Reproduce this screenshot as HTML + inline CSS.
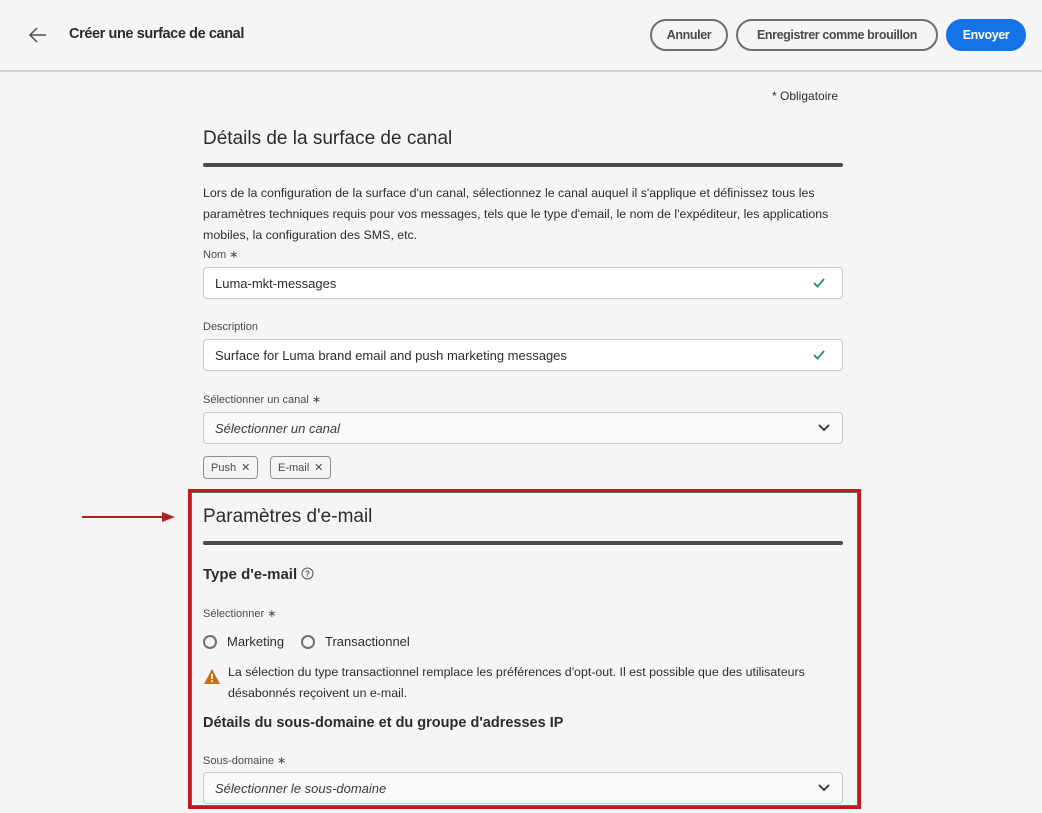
<!DOCTYPE html>
<html><head><meta charset="utf-8"><style>
*{box-sizing:border-box;margin:0;padding:0}
body{width:1042px;height:813px;overflow:hidden;background:#f5f5f5;font-family:"Liberation Sans",sans-serif;color:#2c2c2c;position:relative}
.abs{position:absolute}
.hdr{left:0;top:0;width:1042px;height:72px;border-bottom:2px solid #cfcfcf}
.btn{position:absolute;top:19px;height:32px;border:2px solid #6e6e6e;border-radius:16px;font-size:12.5px;font-weight:bold;color:#4b4b4b;display:flex;align-items:center;justify-content:center;white-space:nowrap;letter-spacing:-0.4px}
.lbl{position:absolute;left:203px;font-size:11px;color:#4b4b4b}
.inp{position:absolute;left:203px;width:640px;height:32px;border:1px solid #c9c9c9;background:#fff;border-radius:4px;font-size:13px;padding-left:11px;display:flex;align-items:center;color:#2c2c2c}
.sel{background:#fafafa;font-style:italic;color:#3a3a3a}
.chk{position:absolute;right:16px;top:8px}
.chev{position:absolute;right:12px;top:9px}
.tag{position:absolute;top:456px;height:23px;border:1px solid #8e8e8e;border-radius:4px;font-size:11px;color:#4b4b4b;display:flex;align-items:center;padding:0 7px;gap:5px}
.rule{position:absolute;left:203px;width:640px;height:4px;background:#4b4b4b;border-radius:2px}
.radio{position:absolute;top:635px;width:14px;height:14px;border:2px solid #707070;border-radius:50%}
</style></head><body>
<div class="abs hdr"></div>
<svg class="abs" style="left:28px;top:26px" width="20" height="18" viewBox="0 0 20 18"><path d="M18 9H2M9 2L2 9l7 7" fill="none" stroke="#505050" stroke-width="1.5"/></svg>
<div class="abs" style="left:69px;top:26px;font-size:14.5px;font-weight:bold;color:#2c2c2c;letter-spacing:-0.4px">Créer une surface de canal</div>
<div class="btn" style="left:650px;width:78px">Annuler</div>
<div class="btn" style="left:736px;width:202px">Enregistrer comme brouillon</div>
<div class="btn" style="left:946px;width:80px;background:#1473e6;border-color:#1473e6;color:#fff">Envoyer</div>

<div class="abs" style="left:772px;top:89px;font-size:12px;color:#2c2c2c">* Obligatoire</div>
<div class="abs" style="left:203px;top:128px;font-size:19px;color:#2c2c2c">Détails de la surface de canal</div>
<div class="rule" style="top:163px"></div>
<div class="abs" style="left:203px;top:183px;font-size:12.4px;line-height:21px;color:#2c2c2c">Lors de la configuration de la surface d'un canal, sélectionnez le canal auquel il s'applique et définissez tous les<br>paramètres techniques requis pour vos messages, tels que le type d'email, le nom de l'expéditeur, les applications<br>mobiles, la configuration des SMS, etc.</div>
<div class="lbl" style="top:248px">Nom ∗</div>
<div class="inp" style="top:267px">Luma-mkt-messages<svg class="chk" width="14" height="14" viewBox="0 0 14 14"><path d="M2 7l3.5 3.5L12 3" fill="none" stroke="#268e6c" stroke-width="1.8"/></svg></div>
<div class="lbl" style="top:321px">Description</div>
<div class="inp" style="top:339px">Surface for Luma brand email and push marketing messages<svg class="chk" width="14" height="14" viewBox="0 0 14 14"><path d="M2 7l3.5 3.5L12 3" fill="none" stroke="#268e6c" stroke-width="1.8"/></svg></div>
<div class="lbl" style="top:393px">Sélectionner un canal ∗</div>
<div class="inp sel" style="top:412px">Sélectionner un canal<svg class="chev" width="12" height="10" viewBox="0 0 12 10"><path d="M1 3l5 5 5-5" fill="none" stroke="#2c2c2c" stroke-width="1.8"/></svg></div>
<div class="tag" style="left:203px">Push <span>✕</span></div>
<div class="tag" style="left:270px">E-mail <span>✕</span></div>

<svg class="abs" style="left:82px;top:510px" width="95" height="14" viewBox="0 0 95 14"><path d="M0 7H82" stroke="#b02020" stroke-width="2"/><path d="M80 2l13 5-13 5z" fill="#b02020"/></svg>
<div class="abs" style="left:188px;top:489px;width:673px;height:320px;border:3px solid #c8161b;box-shadow:inset 0 0 0 1px #666"></div>
<div class="abs" style="left:203px;top:506px;font-size:19px;color:#2c2c2c">Paramètres d'e-mail</div>
<div class="rule" style="top:541px"></div>
<div class="abs" style="left:203px;top:566px;font-size:15px;font-weight:bold;color:#2c2c2c">Type d'e-mail <svg width="13" height="13" viewBox="0 0 13 13" style="vertical-align:-1px"><circle cx="6.5" cy="6.5" r="5.5" fill="none" stroke="#555" stroke-width="1"/><text x="6.5" y="9.5" font-size="8" text-anchor="middle" fill="#555" font-family="Liberation Sans">?</text></svg></div>
<div class="lbl" style="top:607px">Sélectionner ∗</div>
<div class="radio" style="left:203px"></div>
<div class="abs" style="left:227px;top:634px;font-size:13px">Marketing</div>
<div class="radio" style="left:301px"></div>
<div class="abs" style="left:325px;top:634px;font-size:13px">Transactionnel</div>
<svg class="abs" style="left:203px;top:668px" width="18" height="17" viewBox="0 0 18 17"><path d="M9 1L17 16H1z" fill="#cb6f10"/><rect x="8.1" y="6" width="1.8" height="5" fill="#fff"/><rect x="8.1" y="12.3" width="1.8" height="1.8" fill="#fff"/></svg>
<div class="abs" style="left:228px;top:662px;font-size:12.4px;line-height:21px">La sélection du type transactionnel remplace les préférences d'opt-out. Il est possible que des utilisateurs<br>désabonnés reçoivent un e-mail.</div>
<div class="abs" style="left:203px;top:715px;font-size:14.5px;font-weight:bold">Détails du sous-domaine et du groupe d'adresses IP</div>
<div class="lbl" style="top:754px">Sous-domaine ∗</div>
<div class="inp sel" style="top:772px">Sélectionner le sous-domaine<svg class="chev" width="12" height="10" viewBox="0 0 12 10"><path d="M1 3l5 5 5-5" fill="none" stroke="#2c2c2c" stroke-width="1.8"/></svg></div>
</body></html>
